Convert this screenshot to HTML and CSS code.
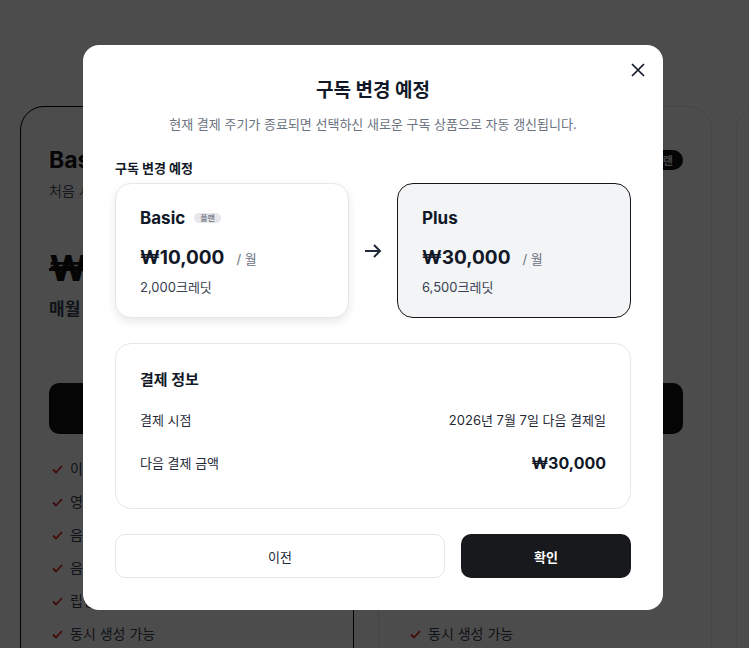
FILE: index.html
```html
<!DOCTYPE html>
<html lang="ko">
<head>
    <meta charset="UTF-8">
    <meta name="viewport" content="width=device-width, initial-scale=1.0">
    <title>구독 변경 예정</title>
    <link rel="stylesheet" href="styles.css">
</head>
<body>
    <div class="page">
        <div class="plans">
            <div class="plan plan-current">
                <div class="plan-head">
                    <h2>Basic</h2>
                </div>
                <p class="plan-desc">처음 시작하는 크리에이터를 위한 플랜</p>
                <div class="plan-price">₩12,000</div>
                <p class="plan-month">매월 ₩10,000</p>
                <button class="plan-btn">현재 이용 중</button>
                <ul class="features">
                    <li><svg width="11" height="9" viewBox="0 0 11 9"><path d="M1 4.5 L4 7.5 L10 1" fill="none" stroke="#dc2626" stroke-width="1.8"/></svg>이미지 생성</li>
                    <li><svg width="11" height="9" viewBox="0 0 11 9"><path d="M1 4.5 L4 7.5 L10 1" fill="none" stroke="#dc2626" stroke-width="1.8"/></svg>영상 생성</li>
                    <li><svg width="11" height="9" viewBox="0 0 11 9"><path d="M1 4.5 L4 7.5 L10 1" fill="none" stroke="#dc2626" stroke-width="1.8"/></svg>음성 생성</li>
                    <li><svg width="11" height="9" viewBox="0 0 11 9"><path d="M1 4.5 L4 7.5 L10 1" fill="none" stroke="#dc2626" stroke-width="1.8"/></svg>음악 생성</li>
                    <li><svg width="11" height="9" viewBox="0 0 11 9"><path d="M1 4.5 L4 7.5 L10 1" fill="none" stroke="#dc2626" stroke-width="1.8"/></svg>립싱크 생성</li>
                    <li><svg width="11" height="9" viewBox="0 0 11 9"><path d="M1 4.5 L4 7.5 L10 1" fill="none" stroke="#dc2626" stroke-width="1.8"/></svg>동시 생성 가능</li>
                </ul>
            </div>
            <div class="plan">
                <div class="plan-head">
                    <h2>Plus</h2>
                    <span class="plan-badge">추천 플랜</span>
                </div>
                <p class="plan-desc">더 많은 작업이 필요한 분을 위한 플랜</p>
                <div class="plan-price">₩36,000</div>
                <p class="plan-month">매월 ₩30,000</p>
                <button class="plan-btn">플랜 변경</button>
                <ul class="features">
                    <li><svg width="11" height="9" viewBox="0 0 11 9"><path d="M1 4.5 L4 7.5 L10 1" fill="none" stroke="#dc2626" stroke-width="1.8"/></svg>이미지 생성</li>
                    <li><svg width="11" height="9" viewBox="0 0 11 9"><path d="M1 4.5 L4 7.5 L10 1" fill="none" stroke="#dc2626" stroke-width="1.8"/></svg>영상 생성</li>
                    <li><svg width="11" height="9" viewBox="0 0 11 9"><path d="M1 4.5 L4 7.5 L10 1" fill="none" stroke="#dc2626" stroke-width="1.8"/></svg>음성 생성</li>
                    <li><svg width="11" height="9" viewBox="0 0 11 9"><path d="M1 4.5 L4 7.5 L10 1" fill="none" stroke="#dc2626" stroke-width="1.8"/></svg>음악 생성</li>
                    <li><svg width="11" height="9" viewBox="0 0 11 9"><path d="M1 4.5 L4 7.5 L10 1" fill="none" stroke="#dc2626" stroke-width="1.8"/></svg>립싱크 생성</li>
                    <li><svg width="11" height="9" viewBox="0 0 11 9"><path d="M1 4.5 L4 7.5 L10 1" fill="none" stroke="#dc2626" stroke-width="1.8"/></svg>동시 생성 가능</li>
                </ul>
            </div>
            <div class="plan">
                <div class="plan-head">
                    <h2>Pro</h2>
                </div>
            </div>
        </div>
    </div>

    <div class="overlay">
        <div class="modal">
            <button class="close-btn" aria-label="닫기">
                <svg width="14" height="14" viewBox="0 0 14 14"><path d="M1 1 L13 13 M13 1 L1 13" stroke="#111827" stroke-width="1.7" fill="none"/></svg>
            </button>
            <h1 class="modal-title">구독 변경 예정</h1>
            <p class="modal-sub">현재 결제 주기가 종료되면 선택하신 새로운 구독 상품으로 자동 갱신됩니다.</p>

            <div class="section-label">구독 변경 예정</div>
            <div class="change">
                <div class="change-card">
                    <div class="cc-name">Basic <span class="cc-badge">플랜</span></div>
                    <div class="cc-price"><strong>₩10,000</strong><span>/ 월</span></div>
                    <div class="cc-credit">2,000크레딧</div>
                </div>
                <div class="change-arrow">
                    <svg width="18" height="14" viewBox="0 0 18 14"><path d="M1 7 H16 M10 1 L16 7 L10 13" stroke="#1f2937" stroke-width="2" fill="none"/></svg>
                </div>
                <div class="change-card next">
                    <div class="cc-name">Plus</div>
                    <div class="cc-price"><strong>₩30,000</strong><span>/ 월</span></div>
                    <div class="cc-credit">6,500크레딧</div>
                </div>
            </div>

            <div class="pay-info">
                <div class="pay-title">결제 정보</div>
                <div class="pay-row">
                    <span>결제 시점</span>
                    <span>2026년 7월 7일 다음 결제일</span>
                </div>
                <div class="pay-row">
                    <span>다음 결제 금액</span>
                    <strong>₩30,000</strong>
                </div>
            </div>

            <div class="actions">
                <button class="btn-prev">이전</button>
                <button class="btn-ok">확인</button>
            </div>
        </div>
    </div>
</body>
</html>
```

FILE: styles.css
```css
* {
    box-sizing: border-box;
}
body {
    margin: 0;
    font-family: Inter, "Noto Sans CJK KR", sans-serif;
    background: #fff;
    color: #111;
    overflow: hidden;
    height: 648px;
}
h1, h2, p, ul {
    margin: 0;
    padding: 0;
}
button {
    font-family: inherit;
    cursor: pointer;
}

/* background pricing page */
.page {
    padding: 106px 0 0 20px;
}
.plans {
    display: grid;
    grid-template-columns: 334px 334px 334px;
    gap: 24px;
    width: 1100px;
}
.plan {
    border: 1px solid #e5e7eb;
    border-radius: 24px;
    padding: 39px 28px 0 28px;
    height: 600px;
}
.plan-current {
    border-color: #000;
}
.plan-head {
    display: flex;
    justify-content: space-between;
    align-items: center;
    height: 28px;
}
.plan-head h2 {
    font-size: 23px;
    font-weight: 700;
    line-height: 28px;
}
.plan-badge {
    background: #111;
    color: #e5e7eb;
    font-size: 11px;
    font-weight: 600;
    padding: 2px 10px;
    border-radius: 999px;
}
.plan-desc {
    margin-top: 7px;
    font-size: 14px;
    line-height: 20px;
    color: #4b5563;
}
.plan-price {
    margin-top: 45px;
    font-size: 36px;
    font-weight: 800;
    line-height: 44px;
    text-decoration: line-through;
}
.plan-month {
    margin-top: 7px;
    font-size: 17px;
    font-weight: 600;
    line-height: 24px;
    color: #374151;
}
.plan-btn {
    margin-top: 62px;
    width: 100%;
    height: 51px;
    border: none;
    border-radius: 10px;
    background: #111;
    color: #fff;
    font-size: 15px;
    font-weight: 600;
}
.features {
    list-style: none;
    margin-top: 25px;
    padding-left: 3px;
}
.features li {
    display: flex;
    align-items: center;
    gap: 7px;
    font-size: 14px;
    line-height: 20px;
    color: #374151;
    margin-bottom: 13px;
}

/* modal */
.overlay {
    position: fixed;
    inset: 0;
    background: rgba(0, 0, 0, 0.7);
}
.modal {
    position: relative;
    margin: 45px 0 0 83px;
    width: 580px;
    background: #fff;
    border-radius: 16px;
    padding: 32px;
}
.close-btn {
    position: absolute;
    top: 16px;
    right: 16px;
    width: 18px;
    height: 18px;
    padding: 2px;
    border: none;
    background: none;
    display: flex;
}
.modal-title {
    text-align: center;
    font-size: 19px;
    font-weight: 700;
    line-height: 28px;
    color: #111827;
}
.modal-sub {
    margin-top: 9px;
    text-align: center;
    font-size: 13px;
    line-height: 20px;
    color: #6b7280;
}
.section-label {
    margin-top: 24px;
    font-size: 13px;
    font-weight: 700;
    line-height: 20px;
    color: #111827;
}
.change {
    margin-top: 5px;
    display: grid;
    grid-template-columns: 1fr 48px 1fr;
    align-items: center;
}
.change-card {
    border: 1px solid #e5e7eb;
    border-radius: 16px;
    padding: 23px 24px 20px 24px;
    box-shadow: 0 4px 10px rgba(0, 0, 0, 0.09);
    background: #fff;
}
.change-card.next {
    background: #f3f4f6;
    border-color: #18181b;
    box-shadow: none;
}
.change-arrow {
    display: flex;
    justify-content: center;
}
.cc-name {
    display: flex;
    align-items: center;
    gap: 9px;
    font-size: 17px;
    font-weight: 700;
    line-height: 22px;
    color: #111827;
}
.cc-badge {
    background: #e5e7eb;
    color: #6b7280;
    font-size: 8px;
    font-weight: 500;
    line-height: 10px;
    padding: 0 6px;
    border-radius: 999px;
}
.cc-price {
    margin-top: 15px;
    display: flex;
    align-items: baseline;
    gap: 12px;
    line-height: 28px;
}
.cc-price strong {
    font-size: 19px;
    font-weight: 700;
    color: #111827;
}
.cc-price span {
    font-size: 13px;
    color: #6b7280;
}
.cc-credit {
    margin-top: 4px;
    font-size: 13px;
    line-height: 20px;
    color: #374151;
}
.pay-info {
    margin-top: 25px;
    border: 1px solid #e5e7eb;
    border-radius: 16px;
    padding: 25px 24px 23px 24px;
}
.pay-title {
    font-size: 15px;
    font-weight: 700;
    line-height: 22px;
    color: #111827;
    margin-bottom: 8px;
}
.pay-row {
    display: flex;
    justify-content: space-between;
    align-items: center;
    padding: 11px 0 12px 0;
    font-size: 13px;
    line-height: 20px;
    color: #1f2937;
}
.pay-row strong {
    font-size: 16px;
    font-weight: 700;
    color: #111827;
}
.actions {
    margin-top: 25px;
    display: grid;
    grid-template-columns: 330px 1fr;
    gap: 16px;
}
.btn-prev, .btn-ok {
    height: 44px;
    border-radius: 10px;
    font-size: 13px;
}
.btn-prev {
    background: #fff;
    border: 1px solid #e5e7eb;
    color: #1f2937;
}
.btn-ok {
    background: #18191c;
    border: none;
    color: #fff;
    font-weight: 700;
}
```
